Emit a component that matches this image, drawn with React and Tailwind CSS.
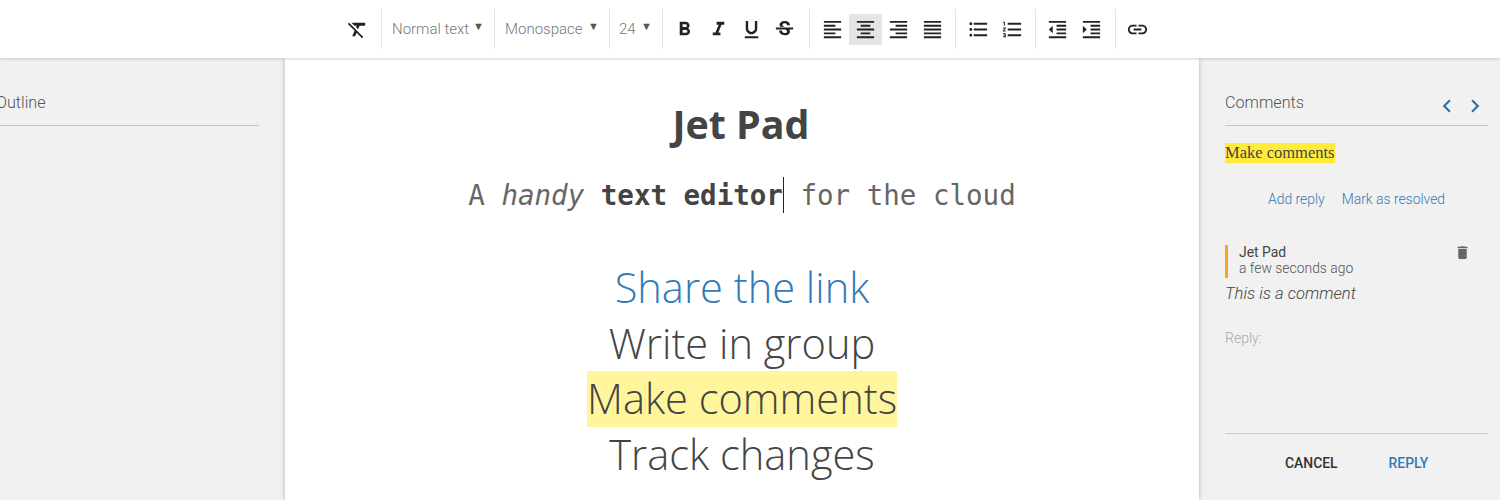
import React from 'react';
import {
  MdFormatClear, MdFormatBold, MdFormatItalic, MdFormatUnderlined, MdStrikethroughS,
  MdFormatAlignLeft, MdFormatAlignCenter, MdFormatAlignRight, MdFormatAlignJustify,
  MdFormatListBulleted, MdFormatListNumbered, MdFormatIndentDecrease, MdFormatIndentIncrease,
  MdLink, MdDelete, MdChevronLeft, MdChevronRight,
} from 'react-icons/md';

const roboto = 'font-["Roboto",sans-serif]';

const IconButton = ({ icon: Icon, active }) => (
  <button className={`w-[33.4px] h-[31px] flex items-center justify-center text-[#222] ${active ? 'bg-[#e5e5e5]' : ''}`}>
    <Icon size={23} />
  </button>
);

const Group = ({ children, last, className = '' }) => (
  <div className={`h-[40px] flex items-center border-[#e4e4e4] ${last ? '' : 'border-r'} ${className}`}>
    {children}
  </div>
);

const Select = ({ label, width, inset = 'pl-[10px]' }) => (
  <Group className={width}>
    <div className={`${inset} flex items-center justify-between w-full pr-[10px] font-light text-[15px] text-[#777]`}>
      <span>{label}</span>
      <span className="text-[11px] text-[#555] -mt-[3px]">▼</span>
    </div>
  </Group>
);

const Toolbar = () => (
  <div className={`relative z-20 h-[58px] bg-white shadow-[0_1px_3px_rgba(0,0,0,0.18)] flex items-center pl-[341px] ${roboto}`}>
    <Group className="w-[41px]"><IconButton icon={MdFormatClear} /></Group>
    <Select label="Normal text" width="w-[113px]" />
    <Select label="Monospace" width="w-[115px]" />
    <Select label="24" width="w-[53px]" inset="pl-[9px]" />
    <Group className="w-[147px] pl-[5px]">
      <IconButton icon={MdFormatBold} />
      <IconButton icon={MdFormatItalic} />
      <IconButton icon={MdFormatUnderlined} />
      <IconButton icon={MdStrikethroughS} />
    </Group>
    <Group className="w-[146px] pl-[5.4px]">
      <IconButton icon={MdFormatAlignLeft} />
      <IconButton icon={MdFormatAlignCenter} active />
      <IconButton icon={MdFormatAlignRight} />
      <IconButton icon={MdFormatAlignJustify} />
    </Group>
    <Group className="w-[80px] pl-[6px]">
      <IconButton icon={MdFormatListBulleted} />
      <IconButton icon={MdFormatListNumbered} />
    </Group>
    <Group className="w-[80px] pl-[5px]">
      <IconButton icon={MdFormatIndentDecrease} />
      <IconButton icon={MdFormatIndentIncrease} />
    </Group>
    <Group last className="pl-[5px]"><IconButton icon={MdLink} /></Group>
  </div>
);

const Outline = () => (
  <div className={`w-[285px] shrink-0 bg-[#f1f1f1] overflow-hidden pr-[26px] pt-[33px] ${roboto}`}>
    <div className="h-[35px] border-b border-[#c4c4c4] text-[16.2px] leading-[24px] font-light text-[#555] -ml-[4px]">Outline</div>
  </div>
);

const Editor = () => (
  <div className="relative z-10 w-[914px] shrink-0 bg-white shadow-[0_0_5px_rgba(0,0,0,0.25)] text-center text-[#444]">
    <div className='font-["Open_Sans",sans-serif] font-bold text-[39.4px] leading-[52px] mt-[40px] -ml-[2px]'>Jet Pad</div>
    <div className='font-["DejaVu_Sans_Mono",monospace] text-[27.5px] leading-[40px] mt-[25px] font-normal text-[#666]'>
      A <i>handy</i> <b className="text-[#444]">text editor</b>
      <span className="inline-block w-0 h-[36px] border-l border-[#222] align-middle relative -top-[2px]"></span> for the cloud
    </div>
    <div className='font-["Open_Sans",sans-serif] font-light text-[41.6px] leading-[55.5px] mt-[45px]'>
      <div className="text-[#337ab7]">Share the link</div>
      <div>Write in group</div>
      <div><span className="inline-block bg-[#fff59d] h-[56px]">Make comments</span></div>
      <div>Track changes</div>
    </div>
  </div>
);

const Comments = () => (
  <div className={`flex-1 bg-[#f1f1f1] pl-[26px] pr-[12px] pt-[33px] flex flex-col ${roboto}`}>
    <div className="h-[35px] border-b border-[#c4c4c4] flex justify-between">
      <span className="text-[16.2px] leading-[24px] font-light text-[#555]">Comments</span>
      <div className="flex text-[#2f73b0] mr-0 gap-[2px] pt-[2px]">
        <MdChevronLeft size={26} />
        <MdChevronRight size={26} />
      </div>
    </div>
    <div className="mt-[15px] h-[20px]">
      <span className='font-["Liberation_Serif",serif] text-[16.5px] leading-[20px] inline-block bg-[#ffeb3b] text-[#444]'>Make comments</span>
    </div>
    <div className="mt-[28px] pl-[43px] flex gap-[17px] text-[13.9px] leading-[20px] font-light text-[#337ab7]">
      <span>Add reply</span>
      <span>Mark as resolved</span>
    </div>
    <div className="mt-[36px] border-l-[3px] border-[#f5a623] pl-[11px] h-[33px] flex justify-between pr-[17px]">
      <div className="text-[13.9px] leading-[16px] -mt-[1px]">
        <div className="text-[#444]">Jet Pad</div>
        <div className="font-light text-[#555]">a few seconds ago</div>
      </div>
      <MdDelete size={17} className="text-[#666] mt-[-1px]" />
    </div>
    <div className="mt-[6px] italic font-light text-[16.6px] leading-[20px] text-[#444]">This is a comment</div>
    <div className="mt-[24px] text-[14px] leading-[20px] font-light text-[#aaa]">Reply:</div>
    <div className="mt-[85px] border-t border-[#ccc] pt-[19px] flex pl-[60px] gap-[51px] text-[13.9px] leading-[20px] font-medium">
      <span className="text-[#333]">CANCEL</span>
      <span className="text-[#337ab7]">REPLY</span>
    </div>
  </div>
);

export default function App() {
  return (
    <div className="w-[1500px] h-[500px] overflow-hidden flex flex-col bg-white">
      <Toolbar />
      <div className="flex-1 flex min-h-0">
        <Outline />
        <Editor />
        <Comments />
      </div>
    </div>
  );
}
